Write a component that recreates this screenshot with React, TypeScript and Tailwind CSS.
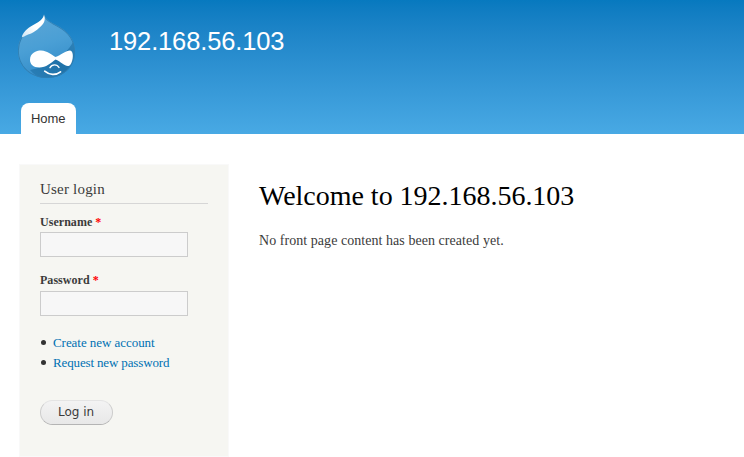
import React from "react";

function Drop() {
  return (
    <svg width="58" height="65" viewBox="0 0 58 65" className="block" aria-hidden="true">
      <defs>
        <linearGradient id="body" x1="0.2" y1="0" x2="0.5" y2="1">
          <stop offset="0" stopColor="#5ca6d6" />
          <stop offset="0.5" stopColor="#4a9fd5" />
          <stop offset="1" stopColor="#318bc8" />
        </linearGradient>
        <linearGradient id="shade" x1="1" y1="0" x2="0" y2="1">
          <stop offset="0" stopColor="#2f84bb" />
          <stop offset="0.5" stopColor="#1f72a9" />
          <stop offset="1" stopColor="#2b80b8" />
        </linearGradient>
        <linearGradient id="shine" x1="1" y1="0" x2="0" y2="1">
          <stop offset="0.5" stopColor="#ffffff" />
          <stop offset="1" stopColor="#cfe6f5" />
        </linearGradient>
        <clipPath id="drop">
          <path d="M26 0C27 5 31 7 36 10C46 15 57 22 57 38C57 54 44 64 29 64C13 64 0 53 0 37C0 25 6 18 13 13C20 9 25 6 26 0Z" />
        </clipPath>
      </defs>
      <g clipPath="url(#drop)">
        <rect width="58" height="65" fill="url(#body)" />
        <path d="M57 24C53 34 46 40 38 45C30 50 22 54 12 56C17 62 23 65 30 65H58Z" fill="url(#shade)" />
        <path d="M26 0C27 5 31 7 36 10C46 15 57 22 57 38C57 54 44 64 29 64C13 64 0 53 0 37C0 25 6 18 13 13" fill="none" stroke="#2f7fb3" strokeWidth="1.6" />
      </g>
      <path d="M26 1C28 6 26 10 21 14C16 19 11 20 7 22C5 23 4 24 4 22C6 17 11 13 17 10C22 7 25 5 26 1Z" fill="url(#shine)" />
      <path d="M37.5 43C43 41 48 36.5 52 36.5C56 37 55.5 46 52.5 50.5C49 55 44 48 37.5 45.5C33 49 28 53.5 21.5 53.5C15 53.5 12 50 12 46C12 39 18 36.5 23 36.5C30 37 34 41 37.5 43Z" fill="#fff" />
      <path d="M32 53.7C34 50 39 50 41 53.5" fill="none" stroke="#fff" strokeWidth="1.4" strokeLinecap="round" />
      <path d="M26.7 57.2C31 61 38 61.5 42.5 57.8" fill="none" stroke="#fff" strokeWidth="1.7" strokeLinecap="round" />
    </svg>
  );
}

function Field({ label, type }: { label: string; type: string }) {
  return (
    <label className="block">
      <span className="block h-[18px] text-[12px] leading-[18px] font-bold tracking-[0.04px]">
        {label} <span className="text-[#ff0000]">*</span>
      </span>
      <input type={type} className="mt-[1px] block h-[25px] w-[148px] border border-[#cccccc] bg-[#f7f7f7] px-1 outline-none" />
    </label>
  );
}

const links = [
  { text: "Create new account", className: "tracking-[-0.05px]" },
  { text: "Request new password", className: "tracking-[-0.14px]" },
];

export default function App() {
  return (
    <div className="h-[457px] overflow-hidden bg-white font-['Liberation_Serif',serif] text-[#3b3b3b]">
      <header className="flex h-[134px] flex-col justify-between bg-linear-to-b from-[#0779bf] to-[#48a9e4] font-['Liberation_Sans',sans-serif]">
        <div className="flex pt-[14px] pl-[18px]">
          <Drop />
          <div className="ml-[33px] pt-[12px] text-[25.5px] leading-[30px] tracking-[-0.14px] text-[#fffeff]">192.168.56.103</div>
        </div>
        <nav className="flex pl-[21px]">
          <a className="h-[31px] w-[55px] rounded-t-[8px] bg-white pl-[10px] text-[13px] leading-[31px] tracking-[-0.1px] text-[#333333]">Home</a>
        </nav>
      </header>
      <div className="flex pt-[30px] pl-[19px]">
        <aside className="h-[293px] w-[210px] border border-[#f9f9f9] bg-[#f6f6f2] px-5 pt-[14px]">
          <h2 className="h-[25px] border-b border-[#d6d6d6] text-[15px] leading-[20px] tracking-[0.2px]">User login</h2>
          <div className="mt-[9px]">
            <Field label="Username" type="text" />
          </div>
          <div className="mt-[14px] pb-px [&_input]:mt-[2px]">
            <Field label="Password" type="password" />
          </div>
          <ul className="mt-[16px] text-[13px] leading-5 text-[#0071b3]">
            {links.map((link) => (
              <li key={link.text} className="flex items-center">
                <span className="mr-[7px] mb-px ml-[1px] size-[5px] rounded-full bg-[#333333]" />
                <a className={link.className}>{link.text}</a>
              </li>
            ))}
          </ul>
          <button className="mt-[27px] block h-[25px] w-[73px] rounded-full border border-[#cccccc] border-t-[#e4e4e4] border-b-[#b4b4b4] bg-linear-to-b from-[#f3f3f3] to-[#e8e8e8] pr-px font-['DejaVu_Sans',sans-serif] text-[12px] leading-[23px] text-[#3a3a3a]">
            Log in
          </button>
        </aside>
        <main className="ml-[30px] pt-[14px]">
          <h1 className="text-[28px] leading-[36px] text-black tracking-[-0.02px]">Welcome to 192.168.56.103</h1>
          <p className="mt-[16px] text-[14px] leading-[21px] tracking-[0.05px]">No front page content has been created yet.</p>
        </main>
      </div>
    </div>
  );
}
